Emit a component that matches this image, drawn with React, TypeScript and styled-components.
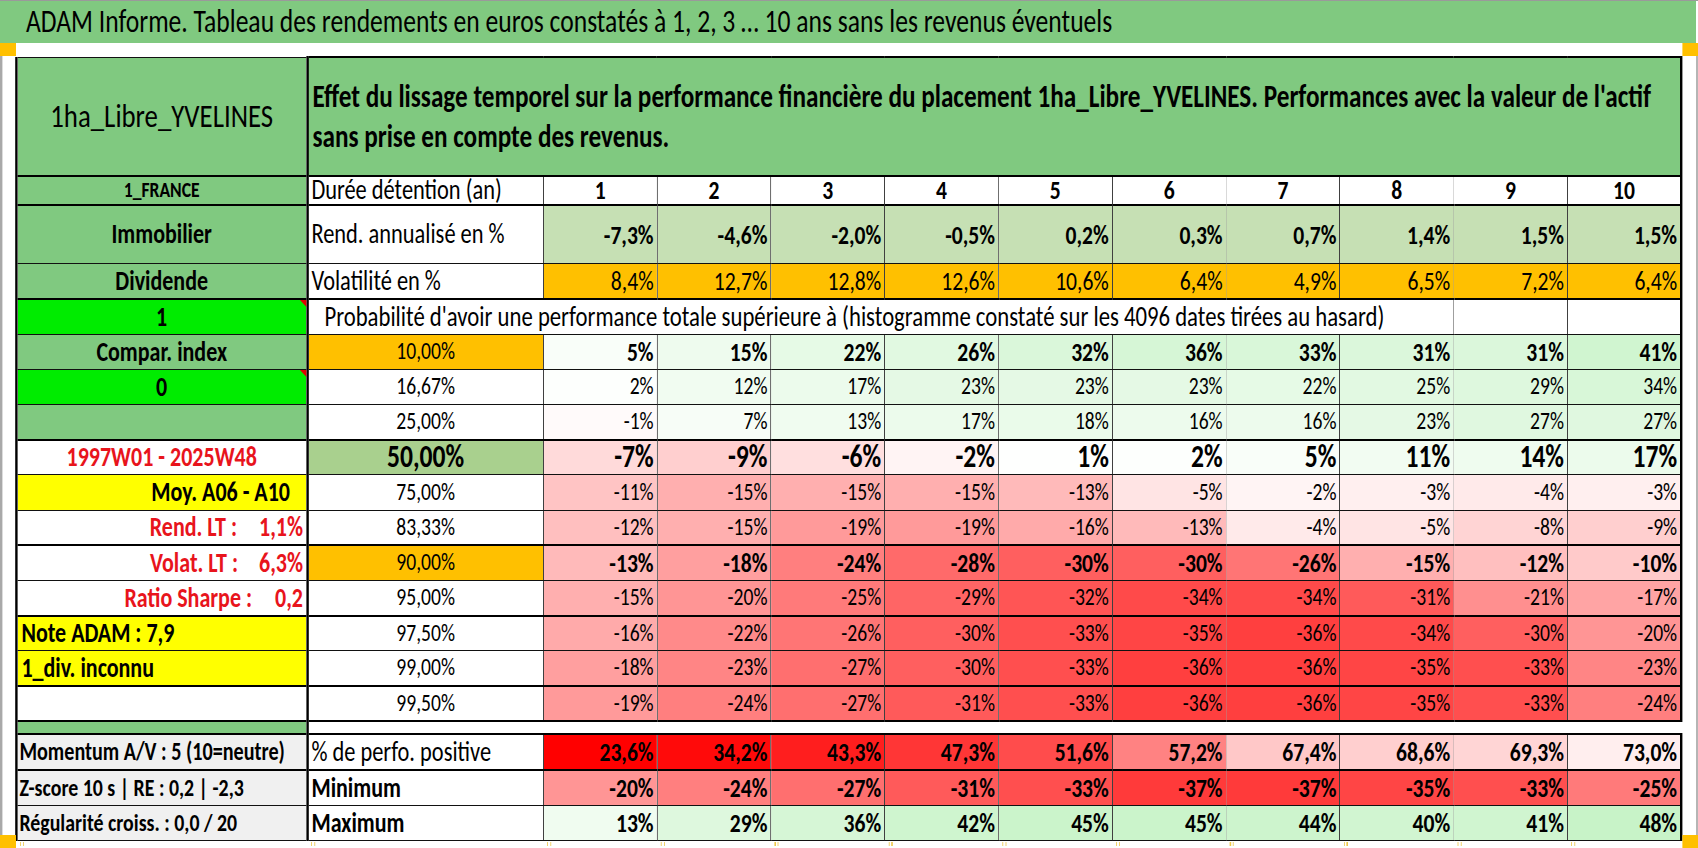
import React from 'react';
import styled, { createGlobalStyle, css } from 'styled-components';

/* The sheet is laid out at its natural (unsqueezed) width, then narrowed
   horizontally as a whole, which reproduces the tall, condensed lettering
   of the captured spreadsheet. */
const SQUEEZE = 0.8;
const PAGE_W = 1698;
const PAGE_H = 848;
const X = (px: number) => px / SQUEEZE; // screen px -> layout px (horizontal only)

const FONT = `"Carlito", "Liberation Sans", "DejaVu Sans", sans-serif`;

const GlobalStyle = createGlobalStyle`
  html, body { margin: 0; padding: 0; background: #ffffff; overflow: hidden; }
  body { font-family: ${FONT}; color: #000; }
  * { box-sizing: border-box; }
`;

const GREEN = '#80C980';
const LIME = '#00EC00';
const YELLOW = '#FFFF00';
const GOLD = '#FFC000';
const PALE = '#C6E0B4';
const SAGE = '#A9D08E';
const GREY = '#F0F0F0';
const RED = '#E8141C';
const THIN = '1px solid #111';
const THICK_H = '2px solid #000';
const THICK_V = '3px solid #000';

const COLS = [291, 236, ...Array(10).fill(113.8)] as number[];

type RGB = [number, number, number];
const mix = (a: RGB, b: RGB, t: number) => {
  const c = a.map((x, i) => Math.round(x + (b[i] - x) * t));
  return `rgb(${c[0]}, ${c[1]}, ${c[2]})`;
};
const heat = (v: number) =>
  v < 0
    ? mix([255, 255, 255], [255, 58, 58], Math.min(1, -v / 37))
    : mix([255, 255, 255], [200, 243, 200], Math.min(1, v / 48));

const Viewport = styled.div`
  width: ${PAGE_W}px;
  height: ${PAGE_H}px;
  overflow: hidden;
  position: relative;
`;

const Frame = styled.div`
  position: relative;
  width: ${X(PAGE_W)}px;
  height: ${PAGE_H}px;
  transform: scaleX(${SQUEEZE});
  transform-origin: 0 0;
  display: flex;
  flex-direction: column;
  background: #fff;
  border-top: 1px solid #9a9a9a;
`;

const TitleBar = styled.div`
  height: 42px;
  flex: none;
  background: ${GREEN};
  margin-right: 3px;
  padding-left: ${X(26)}px;
  display: flex;
  align-items: center;
  font-size: 32px;
  line-height: 1;
  white-space: nowrap;
`;

const Sheet = styled.div`
  flex: 1;
  display: flex;
  flex-direction: column;
  border-left: 3px solid #a9a9a9;
  border-right: 3px solid #b5b5b5;
  border-bottom: 3px solid #a0a0a0;
  padding: 13px 0 0 ${X(15) - 3}px;
`;

const Handle = styled.div<{ $top?: number; $bottom?: number; $left?: number; $right?: number }>`
  position: absolute;
  width: ${X(16)}px;
  height: 13px;
  background: ${GOLD};
  ${(p) => (p.$top !== undefined ? `top: ${p.$top}px;` : '')}
  ${(p) => (p.$bottom !== undefined ? `bottom: ${p.$bottom}px;` : '')}
  ${(p) => (p.$left !== undefined ? `left: ${p.$left}px;` : '')}
  ${(p) => (p.$right !== undefined ? `right: ${p.$right}px;` : '')}
`;

const Grid = styled.table`
  border-collapse: collapse;
  table-layout: fixed;
  width: ${X(1665)}px;
`;

const Col = styled.col<{ $w: number }>`
  width: ${(p) => X(p.$w)}px;
`;

const Row = styled.tr<{ $h: number }>`
  height: ${(p) => p.$h}px;
`;

const Ticks = styled.div`
  display: flex;
  width: ${X(1665)}px;
  height: 6px;
  margin-top: 1px;
`;

const TickSlot = styled.div<{ $w: number }>`
  flex: none;
  width: ${(p) => X(p.$w)}px;
  display: flex;
  gap: ${X(2)}px;
  padding-left: ${X(5)}px;
`;

const Tick = styled.span`
  width: ${X(1)}px;
  height: 4px;
  background: #efc94a;
`;

type CellProps = {
  $bg?: string;
  $align?: 'left' | 'center' | 'right';
  $weight?: number;
  $size?: number;
  $color?: string;
  $thick?: boolean;
  $pad?: number;
  $note?: boolean;
};

const cellBase = css<CellProps>`
  position: relative;
  padding: 0 ${(p) => X(p.$pad ?? 3)}px;
  background: ${(p) => p.$bg ?? '#fff'};
  text-align: ${(p) => p.$align ?? 'right'};
  font-weight: ${(p) => p.$weight ?? 400};
  font-size: ${(p) => p.$size ?? 28}px;
  color: ${(p) => p.$color ?? '#000'};
  border: ${THIN};
  border-bottom: ${(p) => (p.$thick ? THICK_H : THIN)};
  white-space: nowrap;
  line-height: 0.95;
  vertical-align: middle;
  ${(p) =>
    p.$note &&
    css`
      &::after {
        content: '';
        position: absolute;
        top: 0;
        right: 0;
        border-top: 7px solid #e00000;
        border-left: ${X(7)}px solid transparent;
      }
    `}
`;

const LabelCell = styled.td<CellProps>`
  ${cellBase};
  border-left: ${THICK_V};
  border-right: ${THICK_V};
`;

const DescCell = styled.td<CellProps>`
  ${cellBase};
`;

const ValueCell = styled.td<CellProps>`
  ${cellBase};
  &:last-child {
    border-right: ${THICK_V};
  }
`;

const IntroCell = styled.td`
  background: ${GREEN};
  border: ${THICK_H};
  border-left: ${THICK_V};
  border-right: ${THICK_V};
  font-weight: 700;
  font-size: 31.5px;
  line-height: 40px;
  padding: 0 ${X(4)}px 2px ${X(4)}px;
  vertical-align: middle;
  text-align: left;
  white-space: nowrap;
`;

const ProbCell = styled.td`
  border: ${THIN};
  font-size: 28.4px;
  line-height: 0.95;
  padding-left: ${X(16)}px;
  white-space: nowrap;
  text-align: left;
  vertical-align: middle;
`;

const SpacerCell = styled.td`
  border-top: ${THICK_H};
  border-bottom: ${THICK_H};
  border-right: none;
  background: #fff;
`;

const Gap = styled.span<{ $w: number }>`
  display: inline-block;
  width: ${(p) => X(p.$w)}px;
`;

const years = [1, 2, 3, 4, 5, 6, 7, 8, 9, 10];
const rend = ['-7,3%', '-4,6%', '-2,0%', '-0,5%', '0,2%', '0,3%', '0,7%', '1,4%', '1,5%', '1,5%'];
const vola = ['8,4%', '12,7%', '12,8%', '12,6%', '10,6%', '6,4%', '4,9%', '6,5%', '7,2%', '6,4%'];

type Side = {
  text?: React.ReactNode;
  bg: string;
  align?: 'left' | 'center' | 'right';
  color?: string;
  note?: boolean;
  pad?: number;
};

type ProbRow = {
  side: Side;
  p: string;
  pBg?: string;
  pWeight?: number;
  pSize?: number;
  weight: number;
  size: number;
  vals: number[];
  thick?: boolean;
};

const SMALL = 24.5;
const probRows: ProbRow[] = [
  {
    side: { text: 'Compar. index', bg: GREEN, align: 'center' },
    p: '10,00%', pBg: GOLD, weight: 700, size: 27,
    vals: [5, 15, 22, 26, 32, 36, 33, 31, 31, 41],
  },
  {
    side: { text: '0', bg: LIME, align: 'center', note: true },
    p: '16,67%', weight: 400, size: SMALL,
    vals: [2, 12, 17, 23, 23, 23, 22, 25, 29, 34],
  },
  {
    side: { text: '', bg: GREEN },
    p: '25,00%', weight: 400, size: SMALL, thick: true,
    vals: [-1, 7, 13, 17, 18, 16, 16, 23, 27, 27],
  },
  {
    side: { text: '1997W01 - 2025W48', bg: '#fff', align: 'center', color: RED },
    p: '50,00%', pBg: SAGE, pWeight: 700, pSize: 32, weight: 700, size: 32,
    vals: [-7, -9, -6, -2, 1, 2, 5, 11, 14, 17],
  },
  {
    side: { text: 'Moy. A06 - A10', bg: YELLOW, align: 'right', pad: 16 },
    p: '75,00%', weight: 400, size: SMALL,
    vals: [-11, -15, -15, -15, -13, -5, -2, -3, -4, -3],
  },
  {
    side: { text: <>Rend. LT :<Gap $w={22} />1,1%</>, bg: '#fff', align: 'right', color: RED, pad: 3 },
    p: '83,33%', weight: 400, size: SMALL, thick: true,
    vals: [-12, -15, -19, -19, -16, -13, -4, -5, -8, -9],
  },
  {
    side: { text: <>Volat. LT :<Gap $w={21} />6,3%</>, bg: '#fff', align: 'right', color: RED, pad: 3 },
    p: '90,00%', pBg: GOLD, weight: 700, size: 27,
    vals: [-13, -18, -24, -28, -30, -30, -26, -15, -12, -10],
  },
  {
    side: { text: <>Ratio Sharpe :<Gap $w={23} />0,2</>, bg: '#fff', align: 'right', color: RED, pad: 3 },
    p: '95,00%', weight: 400, size: SMALL, thick: true,
    vals: [-15, -20, -25, -29, -32, -34, -34, -31, -21, -17],
  },
  {
    side: { text: 'Note ADAM : 7,9', bg: YELLOW, align: 'left', pad: 4 },
    p: '97,50%', weight: 400, size: SMALL,
    vals: [-16, -22, -26, -30, -33, -35, -36, -34, -30, -20],
  },
  {
    side: { text: '1_div. inconnu', bg: YELLOW, align: 'left', pad: 4 },
    p: '99,00%', weight: 400, size: SMALL, thick: true,
    vals: [-18, -23, -27, -30, -33, -36, -36, -35, -33, -23],
  },
  {
    side: { text: '', bg: '#fff' },
    p: '99,50%', weight: 400, size: SMALL, thick: true,
    vals: [-19, -24, -27, -31, -33, -36, -36, -35, -33, -24],
  },
];

const posColors = ['#FF0000', '#FF0A0A', '#FF1E1E', '#FF3636', '#FF4C4C', '#FF8282', '#FFC8C8', '#FFCFCF', '#FFD5D5', '#FFEEEE'];
const posVals = ['23,6%', '34,2%', '43,3%', '47,3%', '51,6%', '57,2%', '67,4%', '68,6%', '69,3%', '73,0%'];
const minVals = [-20, -24, -27, -31, -33, -37, -37, -35, -33, -25];
const maxVals = [13, 29, 36, 42, 45, 45, 44, 40, 41, 48];

const pct = (v: number) => `${v}%`;

export default function App() {
  return (
    <>
      <GlobalStyle />
      <Viewport>
        <Frame>
          <TitleBar>ADAM Informe. Tableau des rendements en euros constatés à 1, 2, 3 … 10 ans sans les revenus éventuels</TitleBar>
          <Sheet>
            <Grid>
              <colgroup>
                {COLS.map((w, i) => (
                  <Col key={i} $w={w} />
                ))}
              </colgroup>
              <tbody>
                <Row $h={119}>
                  <LabelCell $bg={GREEN} $align="center" $size={33.5} $thick>
                    1ha_Libre_YVELINES
                  </LabelCell>
                  <IntroCell colSpan={11}>
                    Effet du lissage temporel sur la performance financière du placement 1ha_Libre_YVELINES. Performances avec la valeur de l'actif
                    <br />
                    sans prise en compte des revenus.
                  </IntroCell>
                </Row>
                <Row $h={28}>
                  <LabelCell $bg={GREEN} $align="center" $weight={700} $size={22} $thick>
                    1_FRANCE
                  </LabelCell>
                  <DescCell $align="left" $thick>Durée détention (an)</DescCell>
                  {years.map((y) => (
                    <ValueCell key={y} $align="center" $weight={700} $size={27} $thick>
                      {y}
                    </ValueCell>
                  ))}
                </Row>
                <Row $h={59}>
                  <LabelCell $bg={GREEN} $align="center" $weight={700} $size={27.5}>
                    Immobilier
                  </LabelCell>
                  <DescCell $align="left">Rend. annualisé en %</DescCell>
                  {rend.map((r, i) => (
                    <ValueCell key={i} $bg={PALE} $weight={700} $size={27}>
                      {r}
                    </ValueCell>
                  ))}
                </Row>
                <Row $h={35.5}>
                  <LabelCell $bg={GREEN} $align="center" $weight={700} $size={27.5} $thick>
                    Dividende
                  </LabelCell>
                  <DescCell $align="left" $thick>Volatilité en %</DescCell>
                  {vola.map((r, i) => (
                    <ValueCell key={i} $bg={GOLD} $size={27} $thick>
                      {r}
                    </ValueCell>
                  ))}
                </Row>
                <Row $h={35}>
                  <LabelCell $bg={LIME} $align="center" $weight={700} $size={27.5} $note>
                    1
                  </LabelCell>
                  <ProbCell colSpan={9}>
                    Probabilité d'avoir une performance totale supérieure à (histogramme constaté sur les 4096 dates tirées au hasard)
                  </ProbCell>
                  <ValueCell />
                  <ValueCell />
                </Row>
                {probRows.map((r) => (
                  <Row $h={35.2} key={r.p}>
                    <LabelCell
                      $bg={r.side.bg}
                      $align={r.side.align ?? 'center'}
                      $weight={700}
                      $size={27.5}
                      $color={r.side.color}
                      $note={r.side.note}
                      $pad={r.side.pad}
                      $thick={r.thick}
                    >
                      {r.side.text}
                    </LabelCell>
                    <DescCell
                      $align="center"
                      $bg={r.pBg}
                      $weight={r.pWeight ?? 400}
                      $size={r.pSize ?? SMALL}
                      $thick={r.thick}
                    >
                      {r.p}
                    </DescCell>
                    {r.vals.map((v, i) => (
                      <ValueCell key={i} $bg={heat(v)} $weight={r.weight} $size={r.size} $thick={r.thick}>
                        {pct(v)}
                      </ValueCell>
                    ))}
                  </Row>
                ))}
                <Row $h={13}>
                  <LabelCell $bg={GREEN} $thick />
                  <SpacerCell colSpan={11} />
                </Row>
                <Row $h={36}>
                  <LabelCell $bg={GREY} $align="left" $weight={700} $size={25.2} $pad={2} $thick>
                    Momentum A/V : 5 (10=neutre)
                  </LabelCell>
                  <DescCell $align="left" $size={28} $thick>% de perfo. positive</DescCell>
                  {posVals.map((v, i) => (
                    <ValueCell key={i} $bg={posColors[i]} $weight={700} $size={27} $thick>
                      {v}
                    </ValueCell>
                  ))}
                </Row>
                <Row $h={35}>
                  <LabelCell $bg={GREY} $align="left" $weight={700} $size={24.8} $pad={2}>
                    Z-score 10 s | RE : 0,2 | -2,3
                  </LabelCell>
                  <DescCell $align="left" $weight={700} $size={27.5}>Minimum</DescCell>
                  {minVals.map((v, i) => (
                    <ValueCell key={i} $bg={heat(v)} $weight={700} $size={27}>
                      {pct(v)}
                    </ValueCell>
                  ))}
                </Row>
                <Row $h={35}>
                  <LabelCell $bg={GREY} $align="left" $weight={700} $size={24.8} $pad={2}>
                    Régularité croiss. : 0,0 / 20
                  </LabelCell>
                  <DescCell $align="left" $weight={700} $size={27.5}>Maximum</DescCell>
                  {maxVals.map((v, i) => (
                    <ValueCell key={i} $bg={heat(v)} $weight={700} $size={27}>
                      {pct(v)}
                    </ValueCell>
                  ))}
                </Row>
              </tbody>
            </Grid>
            <Ticks>
              {COLS.map((w, i) => (
                <TickSlot key={i} $w={w}>
                  <Tick />
                  <Tick />
                </TickSlot>
              ))}
            </Ticks>
          </Sheet>
          <Handle $top={42} $left={0} />
          <Handle $top={42} $right={0} />
          <Handle $bottom={0} $left={0} />
          <Handle $bottom={0} $right={0} />
        </Frame>
      </Viewport>
    </>
  );
}
